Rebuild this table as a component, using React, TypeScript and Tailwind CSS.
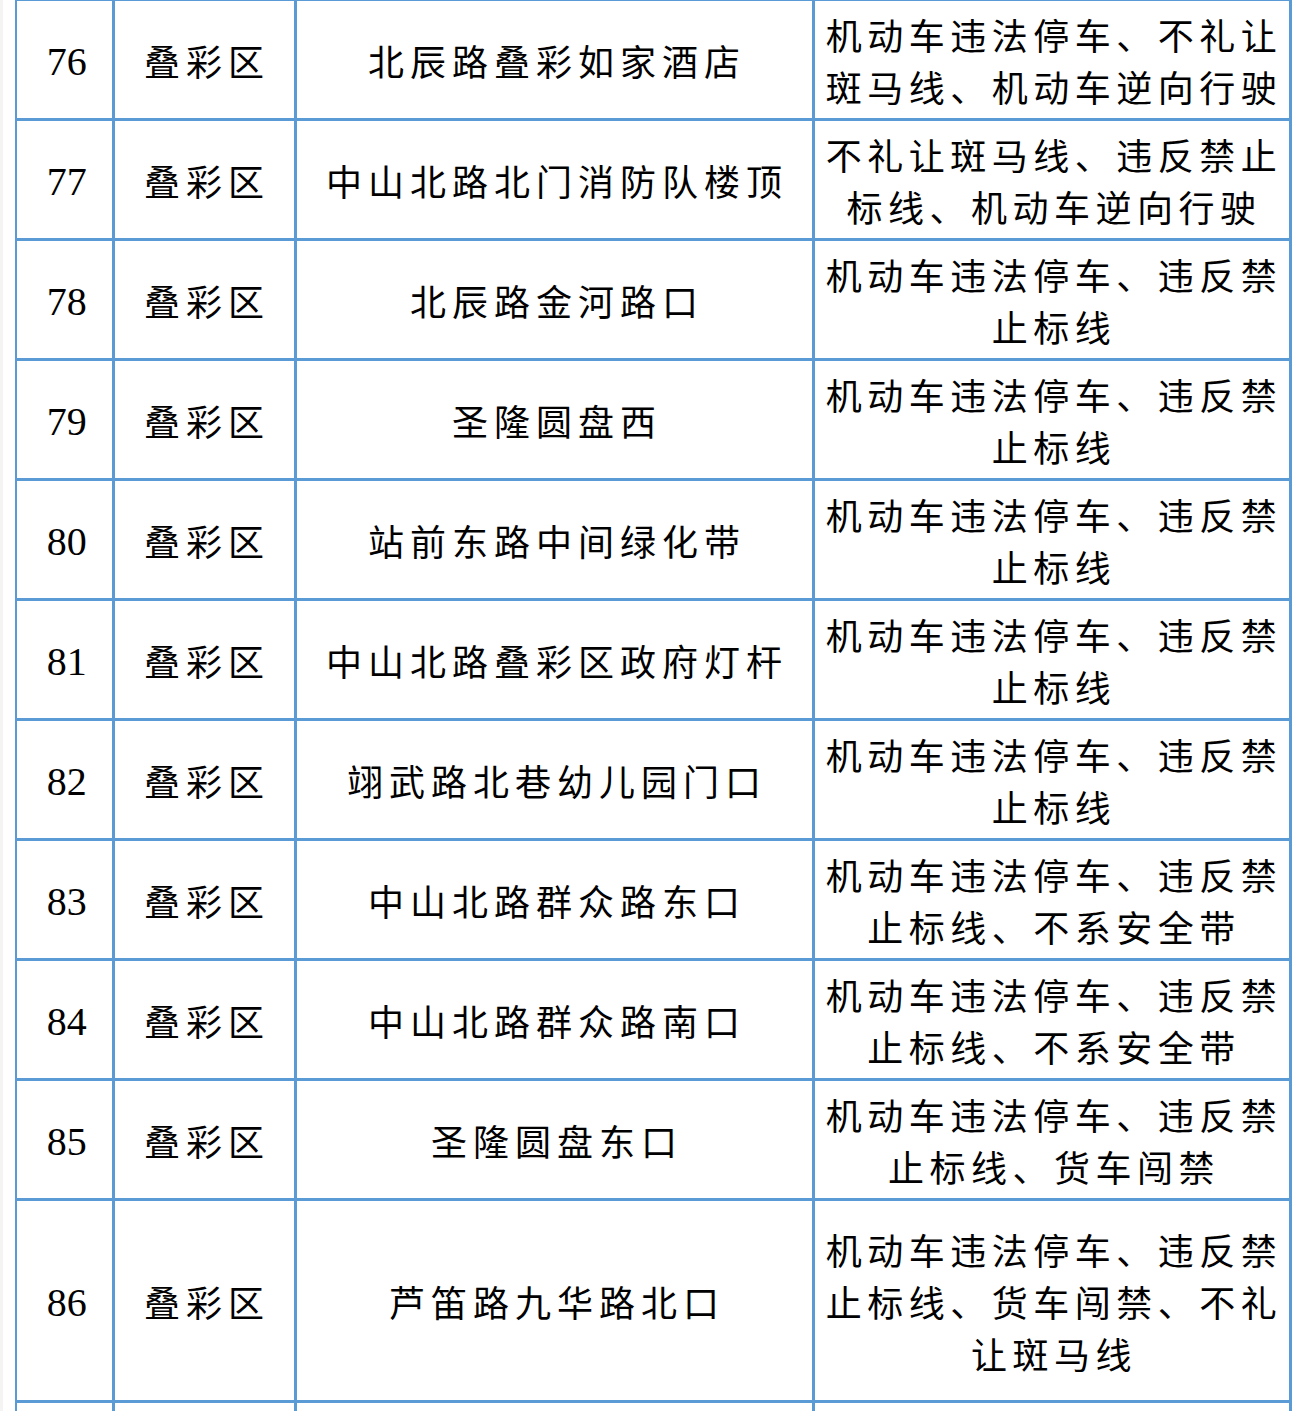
import React from "react";

type Row = {
  no: number;
  district: string;
  place: string;
  violations: string[];
  tall?: boolean;
};

const ROWS: Row[] = [
  { no: 76, district: "叠彩区", place: "北辰路叠彩如家酒店", violations: ["机动车违法停车、不礼让", "斑马线、机动车逆向行驶"] },
  { no: 77, district: "叠彩区", place: "中山北路北门消防队楼顶", violations: ["不礼让斑马线、违反禁止", "标线、机动车逆向行驶"] },
  { no: 78, district: "叠彩区", place: "北辰路金河路口", violations: ["机动车违法停车、违反禁", "止标线"] },
  { no: 79, district: "叠彩区", place: "圣隆圆盘西", violations: ["机动车违法停车、违反禁", "止标线"] },
  { no: 80, district: "叠彩区", place: "站前东路中间绿化带", violations: ["机动车违法停车、违反禁", "止标线"] },
  { no: 81, district: "叠彩区", place: "中山北路叠彩区政府灯杆", violations: ["机动车违法停车、违反禁", "止标线"] },
  { no: 82, district: "叠彩区", place: "翊武路北巷幼儿园门口", violations: ["机动车违法停车、违反禁", "止标线"] },
  { no: 83, district: "叠彩区", place: "中山北路群众路东口", violations: ["机动车违法停车、违反禁", "止标线、不系安全带"] },
  { no: 84, district: "叠彩区", place: "中山北路群众路南口", violations: ["机动车违法停车、违反禁", "止标线、不系安全带"] },
  { no: 85, district: "叠彩区", place: "圣隆圆盘东口", violations: ["机动车违法停车、违反禁", "止标线、货车闯禁"] },
  {
    no: 86,
    district: "叠彩区",
    place: "芦笛路九华路北口",
    violations: ["机动车违法停车、违反禁", "止标线、货车闯禁、不礼", "让斑马线"],
    tall: true,
  },
];

const cell = "border-[3px] border-[#5b9bd5] text-center align-middle p-0";
const cjk = "[font-family:'Noto_Sans_CJK_SC',sans-serif]";

export default function App() {
  return (
    <div className="h-[1411px] bg-white overflow-hidden flex">
      <div className="w-[3px] shrink-0 bg-[#f4f4f4]" />
      <div className="pl-[12px] -mt-[2px]">
        <table className="table-fixed border-collapse w-[1274px] text-black">
          <colgroup>
            <col className="w-[97px]" />
            <col className="w-[182px]" />
            <col className="w-[518px]" />
            <col className="w-[477px]" />
          </colgroup>
          <tbody>
            {ROWS.map((r) => (
              <tr key={r.no} className={r.tall ? "h-[202px]" : "h-[120px]"}>
                <td className={`${cell} border-l-2 [font-family:'Liberation_Serif',serif] text-[40px] leading-none pl-[5px] pt-[4px]`}>
                  {r.no}
                </td>
                <td className={`${cell} ${cjk} text-[36px] tracking-[6px] leading-none`}>
                  <span className="pl-[6px]">{r.district}</span>
                </td>
                <td className={`${cell} ${cjk} text-[36px] tracking-[6px] leading-none`}>
                  <span className="pl-[6px]">{r.place}</span>
                </td>
                <td className={`${cell} ${cjk} text-[36px] tracking-[5.5px] leading-[52px] whitespace-nowrap`}>
                  {r.violations.map((v, i) => (
                    <div key={i} className="pl-[5px]">
                      {v}
                    </div>
                  ))}
                </td>
              </tr>
            ))}
            <tr className="h-[120px]">
              <td className={`${cell} border-l-2`} />
              <td className={cell} />
              <td className={cell} />
              <td className={cell} />
            </tr>
          </tbody>
        </table>
      </div>
    </div>
  );
}
